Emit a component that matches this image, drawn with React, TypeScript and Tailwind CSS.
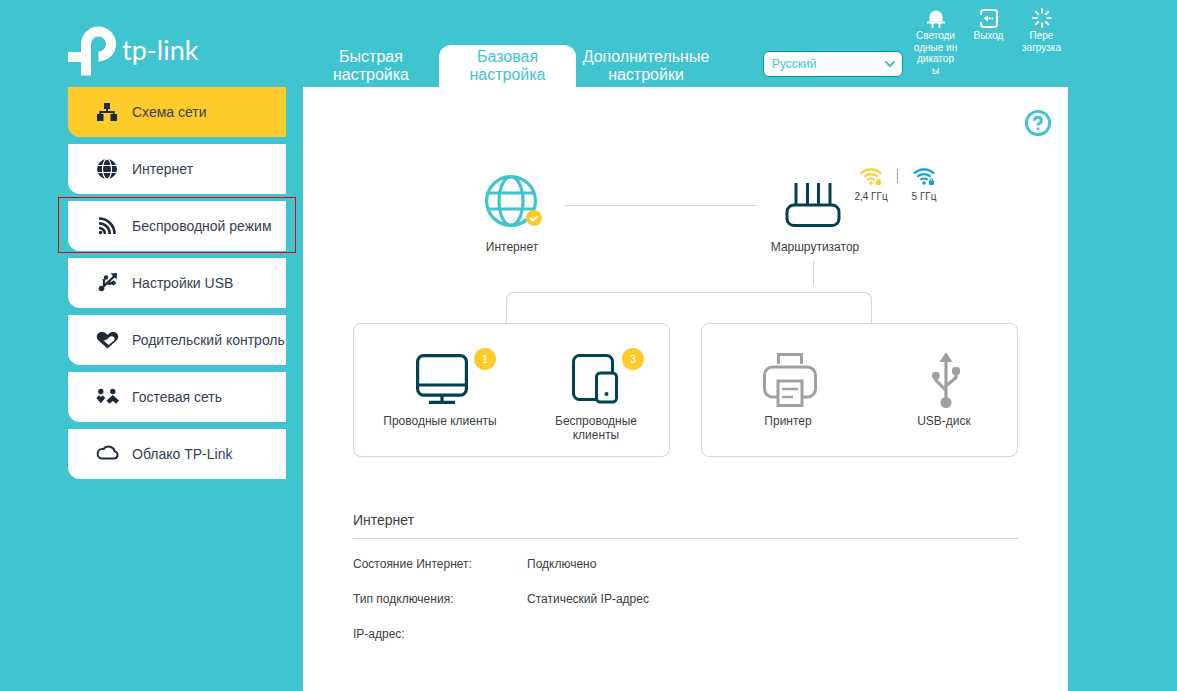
import React from 'react';
import { ChevronDown, CircleHelp } from 'lucide-react';

const teal = '#40c4d0';
const dark = '#00424f';
const gray = '#a0a0a0';

function Logo() {
  return (
    <div className="flex items-start gap-1.5">
      <svg viewBox="0 0 48 50" className="h-12.5 w-12 shrink-0">
        <path d="M18 49.5V18a12.5 12.5 0 1 1 12.5 12.5" fill="none" stroke="#fff" strokeWidth="10" />
        <rect x="0" y="26" width="14" height="10" rx="1" fill="#fff" />
      </svg>
      <span className="mt-2.5 font-['Lato',sans-serif] text-[27px] leading-none text-white">tp-link</span>
    </div>
  );
}

function NetworkIcon() {
  return (
    <svg viewBox="0 0 24 24" className="h-6 w-6 text-gray-800" fill="currentColor">
      <rect x="8" y="3" width="6" height="6" />
      <rect x="1" y="14" width="6.5" height="7" />
      <rect x="14.5" y="14" width="6.5" height="7" />
      <path d="M11 9v3M4.2 15v-3h13.6v3" fill="none" stroke="currentColor" strokeWidth="1.8" />
    </svg>
  );
}

function GlobeSolidIcon() {
  return (
    <svg viewBox="0 0 24 24" className="h-6 w-6 text-gray-800">
      <circle cx="11" cy="12" r="10" fill="currentColor" />
      <g fill="none" stroke="#fff" strokeWidth="1.2">
        <ellipse cx="11" cy="12" rx="4.5" ry="10" />
        <path d="M1.5 8.5h19M1.5 15.5h19" />
      </g>
    </svg>
  );
}

function RssIcon() {
  return (
    <svg viewBox="0 0 24 24" className="h-6 w-6 text-gray-800" fill="none" stroke="currentColor" strokeWidth="2.6">
      <path d="M3 4.5A15.5 15.5 0 0 1 18.5 20M3 9.2A10.8 10.8 0 0 1 13.8 20M3 14A6 6 0 0 1 9 20" />
      <circle cx="4.5" cy="18.5" r="1.7" fill="currentColor" stroke="none" />
    </svg>
  );
}

function UsbIcon() {
  return (
    <svg viewBox="0 0 24 24" className="h-6 w-6 text-gray-800" fill="currentColor">
      <circle cx="5.5" cy="17.5" r="2.8" />
      <circle cx="10" cy="6.5" r="2.2" />
      <rect x="15.5" y="10" width="4" height="4" transform="rotate(45 17.5 12)" />
      <path d="M21 2l-.5 6.5-6-6z" />
      <path d="M5.5 17.5 18.5 5M8 15V8M11 12.5h3.5l3-1" fill="none" stroke="currentColor" strokeWidth="2.4" />
    </svg>
  );
}

function HeartIcon() {
  return (
    <svg viewBox="0 0 24 24" className="h-6 w-6 text-gray-800" fill="currentColor">
      <path d="M11.5 20.5 2 12C-1 8 2 3.5 6.5 4c2 .2 3.8 1.4 5 3 1.2-1.6 3-2.8 5-3 4.5-.5 7.5 4 4.5 8z" />
      <path d="M12.5 17 7.5 12.5c2.5-.3 3.8-1.3 5.5-3 1.3-1.3 3.5-1.7 4.8-.5 1.3 1.3 1 2.8 0 3.8z" fill="#fff" />
    </svg>
  );
}

function GuestIcon() {
  return (
    <svg viewBox="0 0 24 24" className="h-6 w-6 text-gray-800" fill="currentColor">
      <circle cx="4.8" cy="6.5" r="2.7" />
      <circle cx="16.8" cy="6.5" r="2.7" />
      <path d="M.3 13 3 10.3l1.8 1.7 1.7-1.7L9.3 13l-4.5 5.3z" />
      <path d="M16.8 10 23 15.5 20.3 18.8l-3.5-2.8-3.5 2.8-2.8-3.3z" />
    </svg>
  );
}

function CloudIcon() {
  return (
    <svg viewBox="0 0 24 24" className="h-6 w-6 text-gray-800" fill="none" stroke="currentColor" strokeWidth="2">
      <path d="M5.5 16.5H18a3.6 3.6 0 0 0 .8-7.1A6.5 6.5 0 0 0 7.5 7a4.8 4.8 0 0 0-2 9.5Z" />
    </svg>
  );
}

const menu = [
  { label: 'Схема сети', icon: NetworkIcon, active: true },
  { label: 'Интернет', icon: GlobeSolidIcon },
  { label: 'Беспроводной режим', icon: RssIcon, outlined: true },
  { label: 'Настройки USB', icon: UsbIcon },
  { label: 'Родительский контроль', icon: HeartIcon },
  { label: 'Гостевая сеть', icon: GuestIcon },
  { label: 'Облако TP-Link', icon: CloudIcon },
];

function Sidebar() {
  return (
    <nav className="flex w-[218px] flex-col gap-[7px] self-start">
      {menu.map(({ label, icon: Icon, active, outlined }) => (
        <div
          key={label}
          className={`relative flex h-12.5 items-center gap-3 rounded-bl-xl pl-7 text-sm whitespace-nowrap text-gray-700 ${
            active ? 'bg-[#ffcb2b]' : 'bg-white'
          }`}
        >
          <Icon />
          <span>{label}</span>
          {/* red marker drawn over the screenshot */}
          {outlined && <span className="absolute -inset-x-2.5 -top-1 -bottom-0.5 border border-red-600" />}
        </div>
      ))}
    </nav>
  );
}

function Tabs() {
  const tabs = [
    { lines: ['Быстрая', 'настройка'], width: 'w-34' },
    { lines: ['Базовая', 'настройка'], width: 'w-[137px]', active: true },
    { lines: ['Дополнительные', 'настройки'], width: 'w-35' },
  ];
  return (
    <div className="flex">
      {tabs.map(({ lines, width, active }) => (
        <div
          key={lines[0]}
          className={`flex h-[42px] flex-col items-center justify-center rounded-t-xl text-base leading-[18px] ${width} ${
            active ? 'bg-white text-[#40c4d0]' : 'text-white'
          }`}
        >
          {lines.map((l) => (
            <span key={l}>{l}</span>
          ))}
        </div>
      ))}
    </div>
  );
}

function LedIcon() {
  return (
    <svg viewBox="0 0 18 19" className="h-[19px] w-[18px]" fill="#fff">
      <path d="M2.5 12.5V8a6.5 6.5 0 0 1 13 0v4.5z" />
      <rect x="0" y="12.5" width="18" height="2" />
      <rect x="4.5" y="14" width="2" height="5" />
      <rect x="11.5" y="14" width="2" height="5" />
    </svg>
  );
}

function ExitIcon() {
  return (
    <svg viewBox="0 0 18 19" className="h-[19px] w-[18px]" fill="none" stroke="#fff" strokeWidth="2">
      <path d="M1 6V4a3 3 0 0 1 3-3h10a3 3 0 0 1 3 3v11a3 3 0 0 1-3 3H4a3 3 0 0 1-3-3v-2" />
      <path d="M3.5 9.5 8 6.5v6z" fill="#fff" stroke="none" />
      <path d="M8.5 9.5H13" strokeDasharray="2 1" />
    </svg>
  );
}

function RebootIcon() {
  return (
    <svg viewBox="0 0 20 20" className="h-5 w-5" stroke="#fff" strokeWidth="2">
      {[0, 45, 90, 135, 180, 225, 270, 315].map((a) => (
        <line key={a} x1="10" y1="0.5" x2="10" y2="5.5" transform={`rotate(${a} 10 10)`} />
      ))}
    </svg>
  );
}

function TopAction({ icon: Icon, lines }: { icon: React.ComponentType; lines: string[] }) {
  return (
    <div className="flex w-[53px] flex-col items-center text-center text-[10px] leading-[11.5px] text-white">
      <div className="mb-0.5 flex h-5 items-center">
        <Icon />
      </div>
      {lines.map((l) => (
        <span key={l}>{l}</span>
      ))}
    </div>
  );
}

function Header() {
  return (
    <header className="flex h-[87px]">
      <div className="w-[235px] pt-6.5">
        <Logo />
      </div>
      <div className="self-end">
        <Tabs />
      </div>
      <div className="mt-[51px] ml-[47px] flex h-[26px] w-35 items-center justify-between rounded-md border border-[#0097a0] bg-white pr-1 pl-2 text-xs text-[#40c4d0]">
        <span>Русский</span>
        <ChevronDown className="h-4 w-4" strokeWidth={3} />
      </div>
      <div className="ml-auto flex pt-2">
        <TopAction icon={LedIcon} lines={['Светоди', 'одные ин', 'дикатор', 'ы']} />
        <TopAction icon={ExitIcon} lines={['Выход']} />
        <TopAction icon={RebootIcon} lines={['Пере', 'загрузка']} />
      </div>
    </header>
  );
}

function GlobeIcon() {
  return (
    <svg viewBox="0 0 52 52" className="h-13 w-13 overflow-visible">
      <g fill="none" stroke={teal} strokeWidth="3.2">
        <circle cx="26" cy="26" r="24.4" />
        <ellipse cx="26" cy="26" rx="12" ry="24.4" />
        <path d="M3.5 18h45M3.5 34h45" />
      </g>
      <circle cx="49" cy="43" r="8" fill="#ffcb2b" />
      <path d="M45.5 43l2.500 2.500 4.500-4.500" fill="none" stroke="#fff" strokeWidth="2" />
    </svg>
  );
}

function RouterIcon() {
  return (
    <svg viewBox="0 0 56 52" className="h-13 w-14" fill="none" stroke={dark} strokeWidth="3">
      <rect x="2" y="30" width="52" height="20.5" rx="7" />
      <path d="M11 8v22M22.5 8v22M33.5 8v22M45 8v22" />
    </svg>
  );
}

function WifiIcon({ color }: { color: string }) {
  return (
    <svg viewBox="0 0 22 18" className="h-[18px] w-[22px]" fill="none" stroke={color} strokeWidth="2.2">
      <path d="M1 6.5a14 14 0 0 1 20 0M4.3 9.8a9.5 9.5 0 0 1 13.4 0M7.5 13a5 5 0 0 1 7 0" />
      <circle cx="11" cy="16" r="1.8" fill={color} stroke="none" />
      <rect x="16" y="13.5" width="5" height="4.5" rx="1" fill={color} stroke="none" />
      <path d="M17.2 14v-1a1.3 1.3 0 0 1 2.600 0v1" strokeWidth="1" />
    </svg>
  );
}

function Diagram() {
  return (
    <div className="relative h-59 text-xs text-neutral-700">
      <div className="absolute top-22 left-27 flex w-25 flex-col items-center gap-3">
        <GlobeIcon />
        <span className="ml-0.5">Интернет</span>
      </div>
      <div className="absolute top-[118px] left-53 h-px w-48 bg-neutral-300" />
      <div className="absolute top-22 left-101 flex w-28 flex-col items-center gap-3">
        <RouterIcon />
        <span className="ml-1">Маршрутизатор</span>
      </div>
      <div className="absolute top-20 left-125 flex items-start gap-2 text-[10px]">
        <div className="flex w-9 flex-col items-center gap-1 whitespace-nowrap">
          <WifiIcon color="#ffcb2b" />
          <span className="leading-4">2,4 ГГц</span>
        </div>
        <div className="mt-0.5 h-3.5 w-px bg-neutral-400" />
        <div className="flex w-9 flex-col items-center gap-1 whitespace-nowrap">
          <WifiIcon color="#0f9bdc" />
          <span className="leading-4">5 ГГц</span>
        </div>
      </div>
      <div className="absolute top-[174px] left-115 h-6 w-px bg-neutral-300" />
      <div className="absolute top-[205px] bottom-0 left-[153px] w-[366px] rounded-t-lg border border-b-0 border-neutral-300" />
    </div>
  );
}

function MonitorIcon() {
  return (
    <svg viewBox="0 0 52 50" className="h-12.5 w-13" fill="none" stroke={dark} strokeWidth="3.2">
      <rect x="1.6" y="1.6" width="48.8" height="39.5" rx="6" />
      <path d="M2 31h48M26 41v7M13 48.4h26" />
    </svg>
  );
}

function TabletIcon() {
  return (
    <svg viewBox="0 0 46 50" className="h-12.5 w-11.5" fill="none" stroke={dark} strokeWidth="3">
      <rect x="1.5" y="1.5" width="39" height="44" rx="6" />
      <rect x="24.5" y="19" width="20" height="29" rx="4" fill="#fff" />
      <circle cx="34.5" cy="40" r="2" fill={dark} stroke="none" />
    </svg>
  );
}

function PrinterIcon() {
  return (
    <svg viewBox="0 0 54 54" className="mt-0.5 h-13.5 w-13.5 shrink-0" fill="none" stroke={gray} strokeWidth="3">
      <path d="M15.5 11V1.5h23V11" />
      <rect x="1.5" y="14" width="51" height="30" rx="8" />
      <rect x="15" y="28" width="24" height="24.5" fill="#fff" />
      <path d="M19 36h16M19 44h11" strokeWidth="2.5" />
    </svg>
  );
}

function UsbDiskIcon() {
  return (
    <svg viewBox="0 0 28 56" className="mt-0.5 h-14 w-7 shrink-0" fill={gray}>
      <path d="M14 0l6.5 10h-13z" />
      <circle cx="14" cy="50.5" r="5.5" />
      <circle cx="3.8" cy="23.7" r="4" />
      <rect x="20" y="15" width="8" height="8" rx="3" />
      <path d="M14 8v42M3.800 24v4L14 38.500M24 20v5.500L14 34" fill="none" stroke={gray} strokeWidth="3.2" />
    </svg>
  );
}

function Client({
  icon,
  label,
  badge,
  iconClass = '',
  badgeClass = '-right-7',
}: {
  icon: React.ReactNode;
  label: React.ReactNode;
  badge?: string;
  iconClass?: string;
  badgeClass?: string;
}) {
  return (
    <div className="flex w-39 shrink-0 flex-col items-center text-center">
      <div className={`relative flex h-12.5 items-center justify-center ${iconClass}`}>
        {icon}
        {badge && (
          <span
            className={`absolute -top-1.5 flex h-5.5 w-5.5 items-center justify-center rounded-full bg-[#ffcb2b] text-[10px] text-white ${badgeClass}`}
          >
            {badge}
          </span>
        )}
      </div>
      <div className="mt-2.5 text-xs leading-3.5 text-neutral-700">{label}</div>
    </div>
  );
}

function Cards() {
  return (
    <div className="flex h-[134px] justify-between">
      <div className="flex w-[317px] rounded-lg border border-neutral-300 pt-[30px] pl-2">
        <Client icon={<MonitorIcon />} label="Проводные клиенты" badge="1" iconClass="ml-1" />
        <Client
          icon={<TabletIcon />}
          badge="3"
          iconClass="mr-0.5"
          badgeClass="-right-6.5"
          label={
            <>
              Беспроводные
              <br />
              клиенты
            </>
          }
        />
      </div>
      <div className="flex w-[317px] rounded-lg border border-neutral-300 pt-[30px] pl-2">
        <Client icon={<PrinterIcon />} label="Принтер" iconClass="ml-1" />
        <Client icon={<UsbDiskIcon />} label="USB-диск" iconClass="ml-1" />
      </div>
    </div>
  );
}

function InternetInfo() {
  const rows = [
    ['Состояние Интернет:', 'Подключено'],
    ['Тип подключения:', 'Статический IP-адрес'],
    ['IP-адрес:', ''],
  ];
  return (
    <section className="mt-[53px] text-neutral-700">
      <h2 className="border-b border-neutral-300 pb-2 text-sm">Интернет</h2>
      <div className="mt-[7px] text-xs">
        {rows.map(([name, value]) => (
          <div key={name} className="flex h-[35px] items-center">
            <span className="w-43.5">{name}</span>
            <span>{value}</span>
          </div>
        ))}
      </div>
    </section>
  );
}

export default function App() {
  return (
    <div className="h-screen overflow-hidden bg-[#40c4d0] font-['Liberation_Sans',Arial,sans-serif]">
      <div className="ml-17 flex h-full w-[1000px] flex-col">
        <Header />
        <div className="flex flex-1 justify-between">
          <Sidebar />
          <main className="relative w-[765px] bg-white px-12.5">
            <CircleHelp className="absolute top-5.5 right-4 h-7 w-7 text-[#40c4d0]" strokeWidth={2.5} />
            <Diagram />
            <Cards />
            <InternetInfo />
          </main>
        </div>
      </div>
    </div>
  );
}
